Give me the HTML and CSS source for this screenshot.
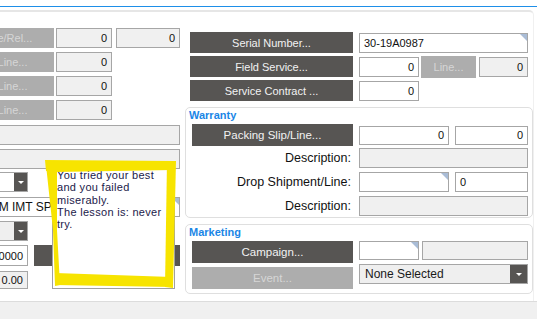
FILE: index.html
```html
<!DOCTYPE html>
<html lang="en">
  <head>
    <meta charset="UTF-8" />
    <title>Service Details</title>
    <link rel="stylesheet" href="styles.css">
  </head>

  <body>
    <div class="tabstrip"></div>

    <div class="sheet">
      <div class="panel">
        <!-- Left column (scrolled off to the left) -->
        <div class="left-col">
          <div class="row">
            <div class="btn btn-off w83 shift">Line/Rel...</div>
            <div class="field ro num w56">0</div>
            <div class="field ro num w64">0</div>
          </div>
          <div class="row">
            <div class="btn btn-off w83">Line...</div>
            <div class="field ro num w56">0</div>
          </div>
          <div class="row">
            <div class="btn btn-off w83">Line...</div>
            <div class="field ro num w56">0</div>
          </div>
          <div class="row">
            <div class="btn btn-off w83">Line...</div>
            <div class="field ro num w56">0</div>
          </div>
          <div class="field ro wide gap5"></div>
          <div class="field ro wide"></div>
          <div class="combo w57 gap3">
            <div class="combo-btn"></div>
          </div>
          <div class="field wide spec tri gap5">ITEM IMT SPEC</div>
          <div class="combo ro w57">
            <div class="combo-btn"></div>
          </div>
          <div class="row tall">
            <div class="field num w57">1.00000</div>
            <div class="btn btn-dark grow"></div>
          </div>
          <div class="field ro num w57 short gap5">0.00</div>
        </div>

        <!-- Right column -->
        <div class="right-col">
          <div class="top-rows">
            <div class="row tall">
              <div class="btn btn-dark w163">Serial Number...</div>
              <div class="field tri grow">30-19A0987</div>
            </div>
            <div class="row tall">
              <div class="btn btn-dark w163">Field Service...</div>
              <div class="field num w60">0</div>
              <div class="btn btn-off w55">Line...</div>
              <div class="field ro num grow">0</div>
            </div>
            <div class="row tall">
              <div class="btn btn-dark w163">Service Contract ...</div>
              <div class="field num w60">0</div>
            </div>
          </div>

          <div class="group">
            <div class="group-title">Warranty</div>
            <div class="group-row packing">
              <div class="btn btn-dark w161">Packing Slip/Line...</div>
              <div class="field num w90">0</div>
              <div class="field num grow">0</div>
            </div>
            <div class="group-row">
              <div class="label w161">Description:</div>
              <div class="field ro grow"></div>
            </div>
            <div class="group-row spaced">
              <div class="label w161">Drop Shipment/Line:</div>
              <div class="field tri w90"></div>
              <div class="field grow">0</div>
            </div>
            <div class="group-row spaced">
              <div class="label w161">Description:</div>
              <div class="field ro grow"></div>
            </div>
          </div>

          <div class="group marketing">
            <div class="group-title">Marketing</div>
            <div class="mk-body">
              <div class="mk-buttons">
                <div class="btn btn-dark">Campaign...</div>
                <div class="btn btn-off">Event...</div>
              </div>
              <div class="mk-fields">
                <div class="mk-row">
                  <div class="field tri w60"></div>
                  <div class="field ro grow"></div>
                </div>
                <div class="combo ro select">
                  None Selected
                  <div class="combo-btn"></div>
                </div>
              </div>
            </div>
          </div>
        </div>
      </div>
    </div>

    <div class="footer"></div>

    <!-- Sticky note with highlighter marks -->
    <div class="note">
      You tried your best<br>
      and you failed<br>
      miserably.<br>
      The lesson is: never<br>
      try.
    </div>
    <svg class="highlight" width="537" height="319" viewBox="0 0 537 319">
      <polygon points="45,160 174,161 173,170 56,172 46,171" />
      <polygon points="46,165 57,166 57,230 60,285 55,286 53,230" />
      <polygon points="167,161 176,161 173,288 165,287" />
      <polygon points="55,273 172,277 172,287 55,285" />
    </svg>
  </body>
</html>
```

FILE: styles.css
```css
* {
  box-sizing: border-box;
}

body,
html {
  margin: 0;
  padding: 0;
  width: 537px;
  height: 319px;
  overflow: hidden;
  background-color: #f0f0f0;
  font-family: "Liberation Sans", Arial, sans-serif;
  font-size: 11px;
  color: #111;
  position: relative;
}

/* Tab strip + blue underline */
.tabstrip {
  height: 6px;
  background-color: #ffffff;
}

.sheet {
  background-color: #ffffff;
  border-top: 1px solid #1e8fe8;
  border-bottom: 1px solid #dcdcdc;
  padding-top: 3px;
  height: 296px;
}

.panel {
  display: flex;
  width: 534px;
  height: 291px;
  border-top: 2px solid #e6e6e6;
  border-right: 1px solid #f0f0f0;
  border-top-right-radius: 5px;
}

.footer {
  height: 17px;
}

/* Generic rows */
.row {
  display: flex;
  align-items: center;
  height: 20px;
  gap: 4px;
}

.row.tall {
  height: 21px;
}

.grow {
  flex: 1;
}

/* Buttons */
.btn {
  height: 100%;
  display: flex;
  align-items: center;
  justify-content: center;
  white-space: nowrap;
  overflow: hidden;
}

.btn-dark {
  background-color: #575553;
  color: #f2f2f2;
}

.btn-off {
  background-color: #adadad;
  color: #d6d6d6;
}

.btn.shift {
  padding-right: 10px;
}

/* Input boxes */
.field {
  position: relative;
  height: 19px;
  display: flex;
  align-items: center;
  padding: 0 4px;
  background-color: #ffffff;
  border: 1px solid #a6a6a6;
  white-space: nowrap;
  overflow: hidden;
}

.field.ro {
  background-color: #f0f0f0;
}

.field.num {
  justify-content: flex-end;
}

.tri::after {
  content: "";
  position: absolute;
  top: 0;
  right: 0;
  border-style: solid;
  border-width: 0 7px 7px 0;
  border-color: transparent #a9bcd6 transparent transparent;
}

/* Combo boxes */
.combo {
  position: relative;
  height: 20px;
  background-color: #ffffff;
  border: 1px solid #a6a6a6;
}

.combo.ro {
  background-color: #efefef;
}

.combo-btn {
  position: absolute;
  top: 0;
  right: 0;
  width: 13px;
  height: 18px;
  background-color: #575553;
}

.combo-btn::after {
  content: "";
  position: absolute;
  left: 4px;
  top: 8px;
  border-style: solid;
  border-width: 3px 3px 0 3px;
  border-color: #ffffff transparent transparent transparent;
}

/* Widths */
.w55 { width: 55px; }
.w56 { width: 56px; }
.w57 { width: 57px; }
.w60 { width: 60px; }
.w64 { width: 64px; }
.w83 { width: 83px; }
.w90 { width: 90px; }
.w161 { width: 161px; }
.w163 { width: 163px; }

/* Left column */
.left-col {
  width: 209px;
  margin-left: -29px;
  padding-top: 16px;
  display: flex;
  flex-direction: column;
  gap: 4px;
  flex-shrink: 0;
}

.left-col .row .btn-off {
  margin-right: -2px;
}

.left-col .field {
  height: 20px;
}

.field.wide {
  width: 209px;
}

.field.spec {
  font-size: 12px;
  padding-left: 8px;
}

.field.short {
  height: 18px;
}

.gap5 {
  margin-top: 1px;
}

.gap3 {
  margin-top: -1px;
}

.left-col .row.tall {
  gap: 6px;
}

.left-col .row.tall .field {
  height: 21px;
}

/* Right column */
.right-col {
  width: 348px;
  margin-left: 5px;
  padding-top: 20px;
  flex-shrink: 0;
}

.top-rows {
  display: flex;
  flex-direction: column;
  gap: 3px;
  padding-left: 5px;
  padding-right: 5px;
}

.top-rows .row {
  gap: 0;
}

.top-rows .field {
  height: 20px;
  margin-left: 6px;
}

.top-rows .btn-off {
  margin-left: 2px;
  height: 22px;
}

.top-rows .btn-off + .field {
  margin-left: 3px;
  background-color: #f0f0f0;
}

/* Group boxes */
.group {
  margin-top: 6px;
  border: 1px solid #dfdfdf;
  border-radius: 5px;
  padding: 0 4px 1px 6px;
  display: flex;
  flex-direction: column;
  gap: 2px;
}

.group-title {
  color: #1a86e6;
  font-weight: bold;
  height: 13px;
  line-height: 13px;
  margin-left: -3px;
  margin-top: 1px;
}

.group-row {
  display: flex;
  align-items: center;
  gap: 6px;
  height: 20px;
}

.group-row.packing {
  height: 22px;
  margin-top: 0;
}

.group-row .btn {
  font-size: 11.5px;
}

.group-row.spaced {
  margin-top: 2px;
}

.label {
  text-align: right;
  padding-right: 2px;
  font-size: 12.5px;
}

.group-row .field {
  height: 20px;
}

.group-row.packing .field {
  height: 19px;
}

/* Marketing group */
.marketing {
  margin-top: 6px;
  padding-bottom: 4px;
}

.mk-body {
  display: flex;
  gap: 6px;
}

.mk-buttons {
  width: 161px;
  display: flex;
  flex-direction: column;
  gap: 4px;
}

.mk-buttons .btn {
  height: 22px;
  font-size: 11.5px;
}

.mk-fields {
  flex: 1;
  display: flex;
  flex-direction: column;
  gap: 4px;
}

.mk-row {
  display: flex;
  gap: 3px;
}

.combo.select {
  font-size: 12px;
  line-height: 18px;
  padding-left: 5px;
  color: #1a1a1a;
}

.combo.select .combo-btn {
  width: 17px;
}

.combo.select .combo-btn::after {
  left: 6px;
}

/* Sticky note overlay */
.note {
  position: absolute;
  left: 52px;
  top: 167px;
  width: 123px;
  height: 122px;
  background-color: #ffffff;
  border: 1px solid #a0a0a0;
  padding: 1px 0 0 4px;
  color: #1c1a4a;
  line-height: 12.3px;
  letter-spacing: 0.3px;
}

.highlight {
  position: absolute;
  left: 0;
  top: 0;
  fill: #f7e400;
  pointer-events: none;
}
```
